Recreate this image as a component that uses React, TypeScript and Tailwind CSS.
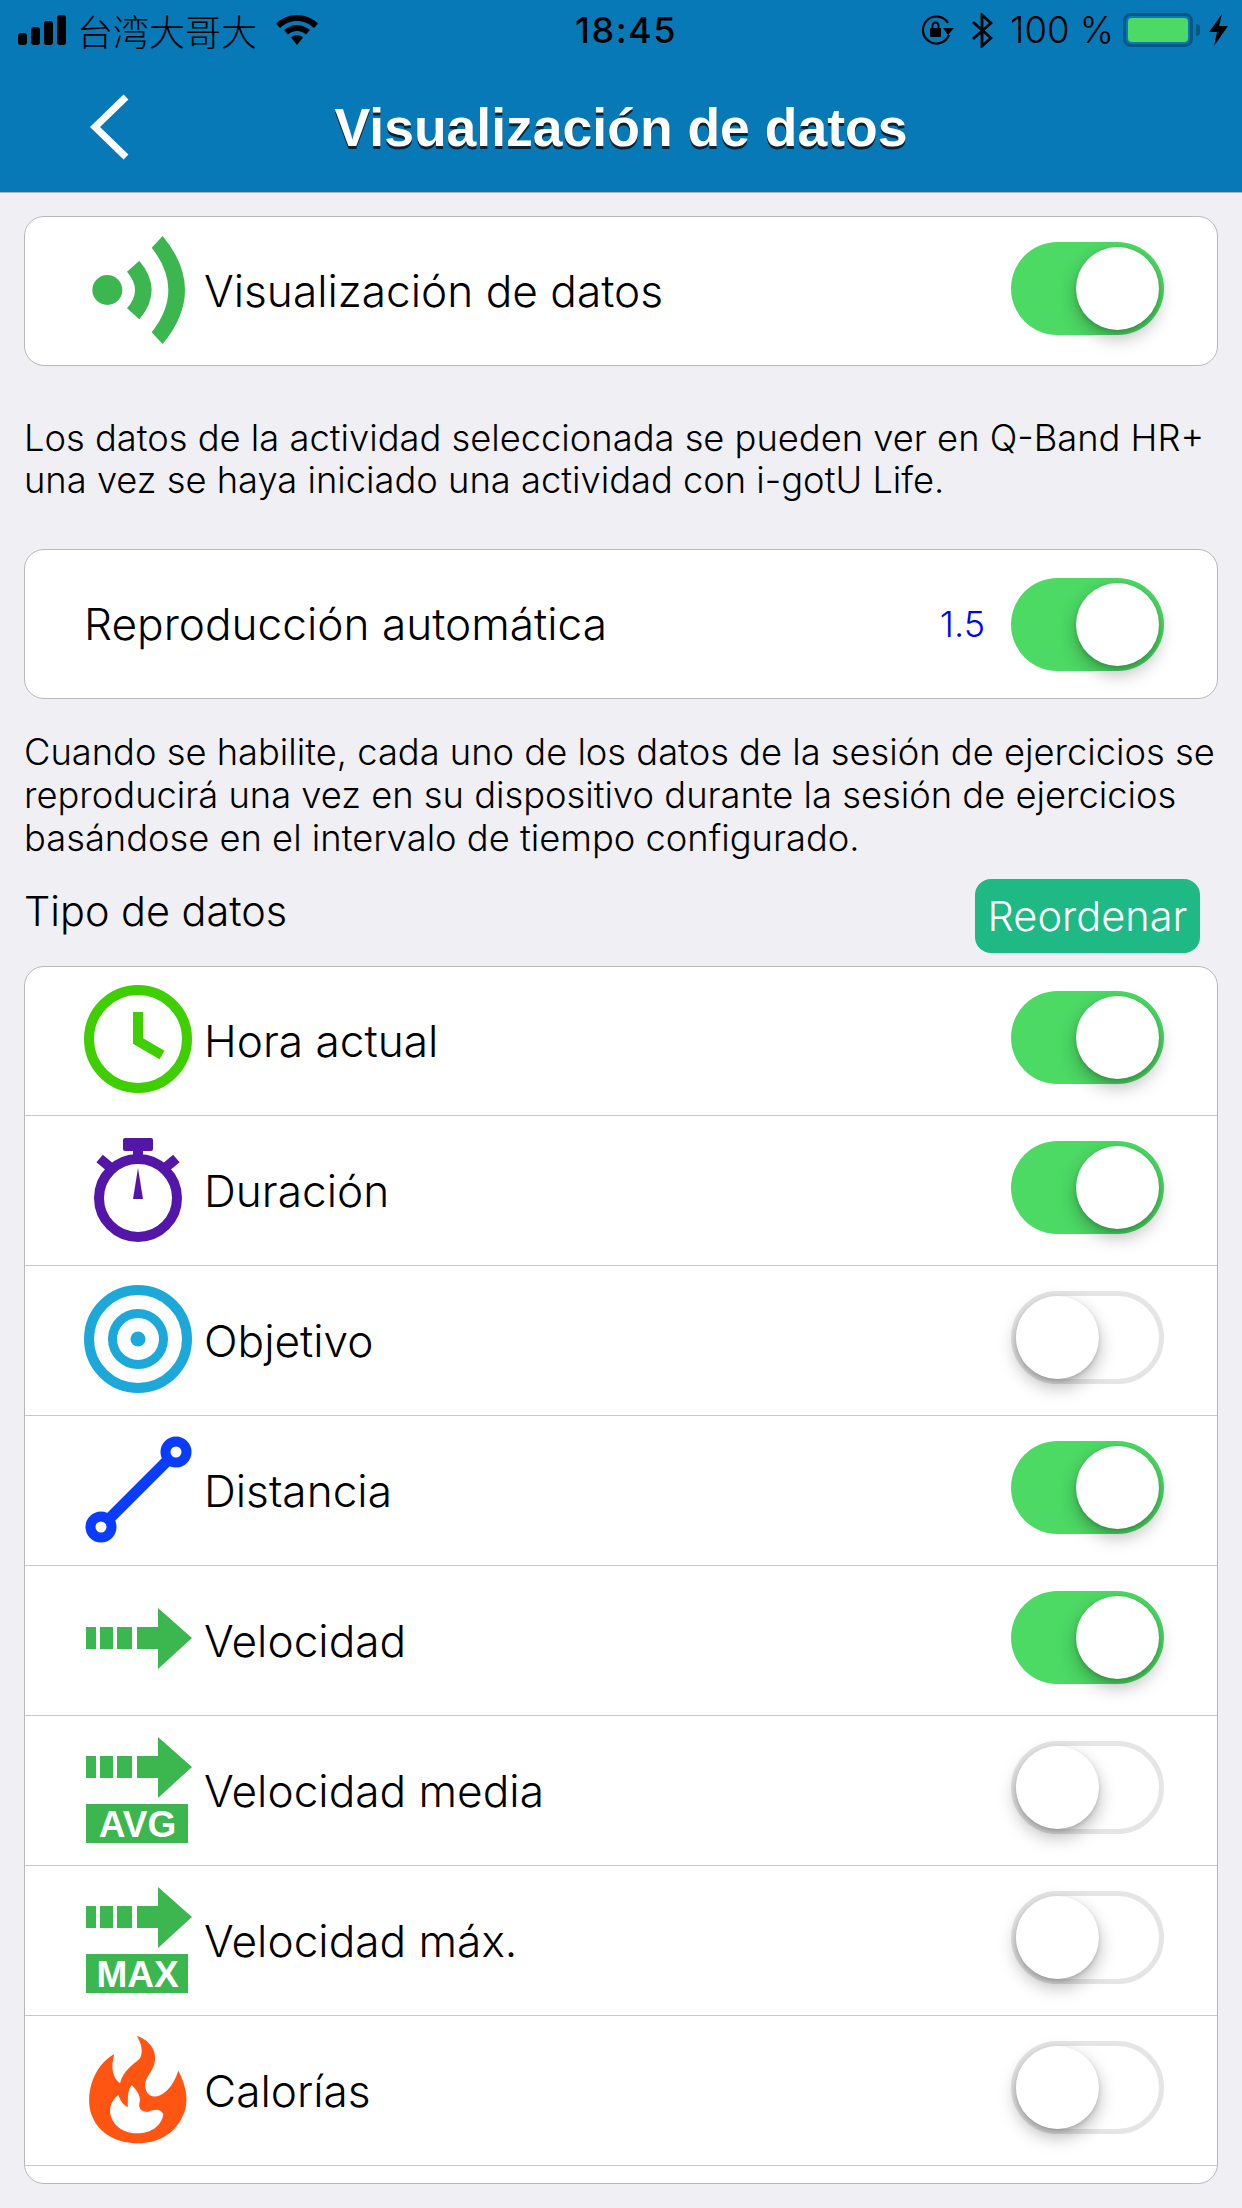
import React from 'react';

const FONT = "font-['Inter','Noto_Sans_CJK_TC',sans-serif]";

const Toggle: React.FC<{ on: boolean; className?: string }> = ({ on, className = '' }) => (
  <div
    className={`flex h-[93px] w-[153px] shrink-0 items-center rounded-full ${
      on ? 'justify-end bg-[#4cd964] p-[5px]' : 'justify-start border-[5px] border-[#e5e5e5] bg-white'
    } ${className}`}
  >
    <div className="h-[83px] w-[83px] rounded-full bg-white shadow-[0_8px_18px_rgba(0,0,0,0.28),0_2px_4px_rgba(0,0,0,0.15)]" />
  </div>
);

const WaveIcon = () => (
  <svg width="108" height="120" viewBox="252 93 324 360" fill="#3cb64f">
    <circle cx="322" cy="270" r="45" />
    <path d="M381 215 L418 182 Q492 270 418 358 L381 325 Q429 270 381 215 Z" />
    <path d="M455 143 L488 108 Q622 270 488 432 L455 397 Q555 270 455 143 Z" />
  </svg>
);

const ClockIcon = () => (
  <svg width="108" height="120" viewBox="0 0 108 120" fill="none" stroke="#3fce00" strokeWidth="10">
    <circle cx="54" cy="58" r="49" />
    <path d="M54 31 V60 L78 74" />
  </svg>
);

const StopwatchIcon = () => (
  <svg width="108" height="120" viewBox="0 0 108 120" fill="#5316a8">
    <circle cx="54" cy="67" r="39" fill="none" stroke="#5316a8" strokeWidth="10" />
    <rect x="39" y="7" width="30" height="13" rx="2" />
    <rect x="49" y="20" width="10" height="9" />
    <rect x="14" y="27" width="14" height="10" transform="rotate(40 21 32)" />
    <rect x="80" y="27" width="14" height="10" transform="rotate(-40 87 32)" />
    <path d="M54 37 L49 68 H59 Z" />
  </svg>
);

const TargetIcon = () => (
  <svg width="108" height="120" viewBox="0 0 108 120" fill="none" stroke="#1ca8d8">
    <circle cx="54" cy="58" r="49" strokeWidth="10" />
    <circle cx="54" cy="58" r="25.5" strokeWidth="9" />
    <circle cx="54" cy="58" r="7.5" fill="#1ca8d8" stroke="none" />
  </svg>
);

const DistanceIcon = () => (
  <svg width="108" height="120" viewBox="0 0 108 120" fill="none" stroke="#0a3cff" strokeWidth="10">
    <circle cx="92" cy="21" r="10.5" />
    <circle cx="17" cy="96" r="10.5" />
    <path d="M84 29 L25 88" strokeWidth="11" />
  </svg>
);

const Arrow: React.FC<{ dy?: number }> = ({ dy = 0 }) => (
  <g transform={`translate(0 ${dy})`}>
    <rect x="2" y="46" width="10" height="22" />
    <rect x="16" y="46" width="13" height="22" />
    <rect x="33" y="46" width="15" height="22" />
    <rect x="53" y="46" width="21" height="22" />
    <path d="M74 27 L108 57 L74 88 Z" />
  </g>
);

const SpeedIcon = () => (
  <svg width="108" height="120" viewBox="0 0 108 120" fill="#3cb64f">
    <Arrow />
  </svg>
);

const SpeedBadgeIcon: React.FC<{ label: string }> = ({ label }) => (
  <svg width="108" height="120" viewBox="0 0 108 120" fill="#3cb64f">
    <Arrow dy={-21} />
    <rect x="2" y="73" width="102" height="39" />
    <text
      x="53.5"
      y="106"
      textAnchor="middle"
      fill="#fff"
      fontSize="37"
      fontWeight="700"
      fontFamily="'Liberation Sans', sans-serif"
    >
      {label}
    </text>
  </svg>
);

const FlameIcon = () => (
  <svg width="108" height="120" viewBox="252 153 324 360">
    <path
      fill="#ff5512"
      d="M410 168 C450 180 475 215 462 255 C452 285 425 300 440 335 C455 365 510 350 535 272 C560 320 570 370 545 415 C520 465 470 490 415 490 C350 490 295 460 275 405 C255 350 275 260 343 222 C330 265 340 295 360 310 C370 270 400 255 420 235 C430 215 425 190 410 168 Z"
    />
    <path
      fill="#fff"
      d="M395 315 C380 335 385 360 383 382 C370 375 360 360 355 345 C335 360 325 385 333 410 C345 445 380 460 412 460 C450 460 485 440 490 402 C480 385 465 388 445 395 C425 398 415 385 418 370 C425 350 410 330 395 315 Z"
    />
  </svg>
);

const rows = [
  { icon: <ClockIcon />, label: 'Hora actual', on: true },
  { icon: <StopwatchIcon />, label: 'Duración', on: true },
  { icon: <TargetIcon />, label: 'Objetivo', on: false },
  { icon: <DistanceIcon />, label: 'Distancia', on: true },
  { icon: <SpeedIcon />, label: 'Velocidad', on: true },
  { icon: <SpeedBadgeIcon label="AVG" />, label: 'Velocidad media', on: false },
  { icon: <SpeedBadgeIcon label="MAX" />, label: 'Velocidad máx.', on: false },
  { icon: <FlameIcon />, label: 'Calorías', on: false },
];

const StatusBar = () => (
  <div className="grid h-[60px] grid-cols-3 items-center text-black">
    <div className="flex items-center pl-[18px]">
      <svg width="48" height="30" viewBox="0 0 48 30" fill="#000">
        <rect x="0" y="18" width="9" height="12" rx="3" />
        <rect x="13" y="12" width="9" height="18" rx="3" />
        <rect x="26" y="6" width="9" height="24" rx="3" />
        <rect x="39" y="0" width="9" height="30" rx="3" />
      </svg>
      <span className="ml-[11px] text-[36px] leading-[44px] font-['Noto_Sans_CJK_SC',sans-serif] font-light whitespace-nowrap">台湾大哥大</span>
      <svg className="ml-[19px]" width="42" height="30" viewBox="0 0 42 30" fill="#000">
        <path d="M21 0 C29 0 36 3 42 8.5 L38 13 C33 8.5 27 6 21 6 C15 6 9 8.5 4 13 L0 8.5 C6 3 13 0 21 0 Z" />
        <path d="M21 10 C26 10 30 12 34 15 L30 19.5 C27.5 17.5 24.5 16 21 16 C17.5 16 14.5 17.5 12 19.5 L8 15 C12 12 16 10 21 10 Z" />
        <path d="M21 20 C23.5 20 25.5 21 27 22.5 L21 30 L15 22.5 C16.5 21 18.500 20 21 20 Z" />
      </svg>
    </div>
    <div className="pl-[10px] text-center text-[36px] leading-[40px] font-medium tracking-[1.5px]">18:45</div>
    <div className="flex items-center justify-end pr-[14px]">
      <svg width="34" height="30" viewBox="0 0 34 30" fill="none" stroke="#000" strokeWidth="2.2">
        <path d="M29 20 A13.500 13.500 0 1 1 28 8" />
        <path d="M34 13 L28 20 L23 13 Z" fill="#000" stroke="none" />
        <rect x="10" y="13" width="11" height="9" rx="1" fill="#000" stroke="none" />
        <path d="M12.500 13 V10.500 A3 3 0 0 1 18.500 10.500 V13" strokeWidth="1.800" />
      </svg>
      <svg className="ml-[18px]" width="21" height="35" viewBox="0 0 21 35" fill="none" stroke="#000" strokeWidth="2.8">
        <path d="M1 9 L19 25 L10 33 V2 L19 10 L1 26" />
      </svg>
      <span className="ml-[17px] text-[36.5px] leading-[40px] font-light whitespace-nowrap">100 %</span>
      <div className="ml-[9px] flex h-[34px] w-[70px] items-center rounded-[8px] border-[3px] border-[#0a5685] p-[2px]">
        <div className="h-full w-full rounded-[4px] bg-[#4cd964]" />
      </div>
      <div className="ml-[3px] h-[12px] w-[4px] rounded-r-full bg-[#0a5685]" />
      <svg className="ml-[9px]" width="19" height="32" viewBox="0 0 19 32" fill="#000">
        <path d="M13 0 L0 18 H8 L5 32 L19 12 H10 Z" />
      </svg>
    </div>
  </div>
);

const App: React.FC = () => (
  <div className={`min-h-[2208px] bg-[#efeff4] ${FONT}`}>
    <header className="h-[193px] border-b border-[#b0b0b0] bg-[#0779b7]">
      <StatusBar />
      <div className="relative flex h-[132px] items-center justify-center">
        <svg className="absolute top-[34px] left-[89px]" width="42" height="66" viewBox="0 0 42 66" fill="none" stroke="#fff" strokeWidth="7">
          <path d="M37 3 L6 33 L37 63" />
        </svg>
        <h1 className="mt-[3px] font-['Liberation_Sans',sans-serif] text-[53.5px] leading-[60px] font-bold text-white [text-shadow:0_3px_0_#0a2433]">
          Visualización de datos
        </h1>
      </div>
    </header>

    <main className="px-6">
      <section className="mt-[23px] flex h-[150px] items-center rounded-[20px] border border-[#b8b8b8] bg-white pr-[53px] pl-[59px]">
        <WaveIcon />
        <span className="ml-[12px] flex-1 text-[44.2px] leading-[54px] font-[350] text-black">Visualización de datos</span>
        <Toggle on className="mb-[5px]" />
      </section>

      <p className="mt-[51px] text-[36.3px] leading-[42px] font-[350] whitespace-nowrap text-black">
        Los datos de la actividad seleccionada se pueden ver en Q-Band HR+
        <br />
        una vez se haya iniciado una actividad con i-gotU Life.
      </p>

      <section className="mt-[48px] flex h-[150px] items-center rounded-[20px] border border-[#b8b8b8] bg-white pr-[53px] pl-[59px]">
        <span className="flex-1 text-[44.2px] leading-[54px] font-[350] text-black">Reproducción automática</span>
        <span className="mr-[26px] text-[36px] leading-[40px] font-[350] text-[#0000ff]">1.5</span>
        <Toggle on />
      </section>

      <p className="mt-[32px] text-[36.3px] leading-[43px] font-[350] whitespace-nowrap text-black">
        Cuando se habilite, cada uno de los datos de la sesión de ejercicios se
        <br />
        reproducirá una vez en su dispositivo durante la sesión de ejercicios
        <br />
        basándose en el intervalo de tiempo configurado.
      </p>

      <div className="mt-[19px] flex items-start justify-between pr-[18px]">
        <span className="mt-[8px] text-[41.4px] leading-[48px] font-[350] text-black">Tipo de datos</span>
        <button className="h-[74px] w-[225px] rounded-[16px] bg-[#1eb984] text-[41.5px] leading-[48px] font-[350] text-white">Reordenar</button>
      </div>

      <section className="mt-[13px] overflow-hidden rounded-[20px] border border-[#b8b8b8] bg-white pb-[17px]">
        {rows.map((row, i) => (
          <div key={row.label} className="flex h-[150px] items-center border-b border-[#c8c8c8] pr-[53px] pl-[59px] first:h-[149px]">
            {row.icon}
            <span className="ml-[12px] flex-1 text-[44.2px] leading-[54px] font-[350] text-black">{row.label}</span>
            <Toggle on={row.on} className={i === 0 ? 'mb-[8px]' : 'mb-[6px]'} />
          </div>
        ))}
      </section>
    </main>
  </div>
);

export default App;
